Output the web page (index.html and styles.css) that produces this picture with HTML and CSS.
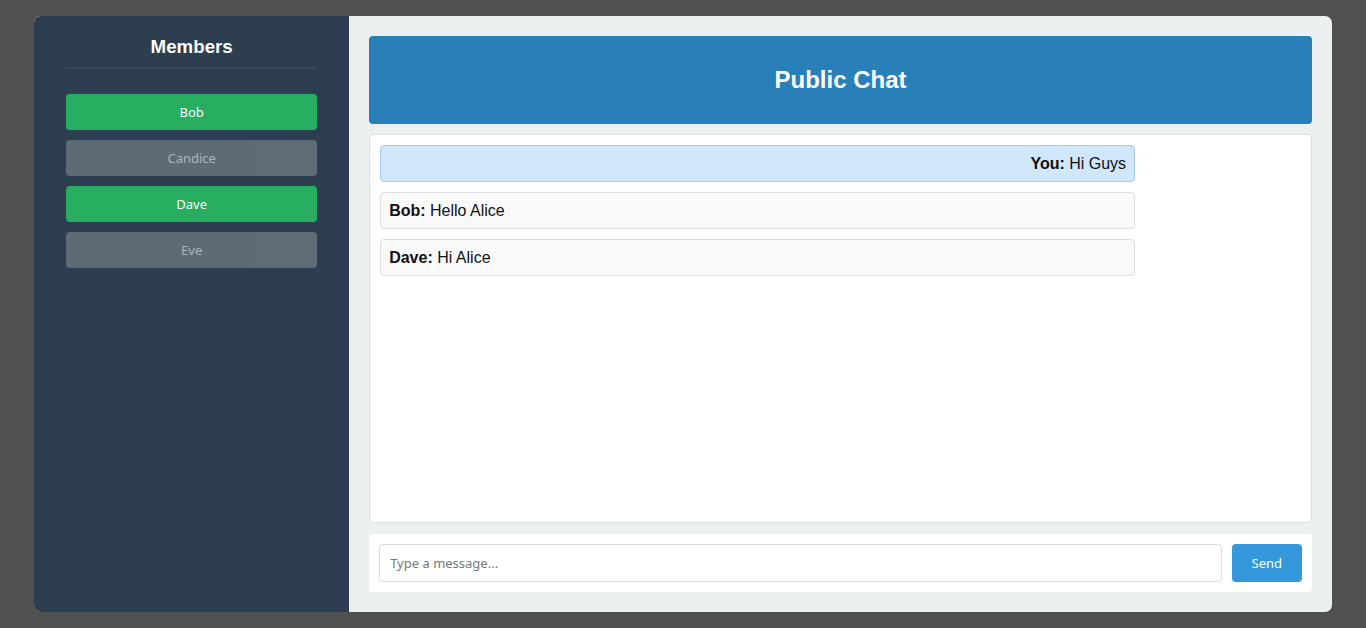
FILE: index.html
```html
<!DOCTYPE html>
<html>
<head>
<meta charset="utf-8">
<link rel="stylesheet" href="styles.css">
</head>
<body>
<div class="app">
  <aside class="sidebar">
    <h3 class="sidebar-title">Members</h3>
    <div class="member-list">
      <button class="member online">Bob</button>
      <button class="member offline">Candice</button>
      <button class="member online">Dave</button>
      <button class="member offline">Eve</button>
    </div>
  </aside>
  <main class="main">
    <header class="chat-header"><h2>Public Chat</h2></header>
    <section class="chat-box">
      <div class="msg mine"><b>You:</b> Hi Guys</div>
      <div class="msg"><b>Bob:</b> Hello Alice</div>
      <div class="msg"><b>Dave:</b> Hi Alice</div>
    </section>
    <form class="composer">
      <input class="composer-input" type="text" placeholder="Type a message...">
      <button class="send" type="button">Send</button>
    </form>
  </main>
</div>
</body>
</html>
```

FILE: styles.css
```css
* { box-sizing: border-box; }
html, body { height: 100%; }
body {
  margin: 0;
  padding: 16px 0;
  background: #505050;
  font-family: "Liberation Sans", Arial, sans-serif;
}
.app {
  width: 95%;
  height: 100%;
  margin: 0 auto;
  display: flex;
  border-radius: 7px;
  overflow: hidden;
  background: #ecf0f1;
}
.sidebar {
  width: 315px;
  flex: none;
  background: #2c3e50;
  padding: 20px 32px;
  color: #fff;
}
.sidebar-title {
  margin: 0;
  font-size: 18.72px;
  font-weight: bold;
  text-align: center;
  line-height: 22px;
  padding-bottom: 9px;
  border-bottom: 2px solid #34495e;
}
.member-list {
  margin-top: 25px;
  display: flex;
  flex-direction: column;
  gap: 10px;
}
.member {
  height: 36px;
  border: none;
  border-radius: 4px;
  color: #fff;
  font-family: "Noto Sans", sans-serif;
  font-size: 13px;
  padding: 0;
}
.member.online { background: #27ae60; }
.member.offline { background: #7f8c8d; opacity: 0.6; }
.main {
  flex: 1;
  padding: 20px;
  display: flex;
  flex-direction: column;
  min-width: 0;
}
.chat-header {
  background: #2980b9;
  border-radius: 4px;
  height: 88px;
  display: flex;
  align-items: center;
  justify-content: center;
  flex: none;
}
.chat-header h2 {
  margin: 0;
  color: #fff;
  font-size: 24px;
  font-weight: bold;
}
.chat-box {
  flex: 1;
  margin-top: 10px;
  background: #fff;
  border: 1px solid #ddd;
  border-radius: 4px;
  padding: 10px;
  display: flex;
  flex-direction: column;
  gap: 10px;
}
.msg {
  width: 82%;
  padding: 8px;
  line-height: 19px;
  font-size: 16px;
  color: #111;
  background: #f9f9f9;
  border: 1px solid #ddd;
  border-radius: 4px;
}
.msg.mine {
  background: #d0e6fb;
  border-color: #a5c8f0;
  text-align: right;
}
.composer {
  margin: 11px 0 0;
  background: #fff;
  border-radius: 4px;
  padding: 10px;
  display: flex;
  gap: 10px;
  flex: none;
}
.composer-input {
  flex: 1;
  height: 38px;
  border: 1px solid #ddd;
  border-radius: 4px;
  padding: 0 10px;
  font-family: "Noto Sans", sans-serif;
  font-size: 13px;
  color: #333;
}
.composer-input::placeholder { color: #777; }
.send {
  width: 70px;
  height: 38px;
  border: none;
  border-radius: 4px;
  background: #3498db;
  color: #fff;
  font-family: "Noto Sans", sans-serif;
  font-size: 13px;
}
```
